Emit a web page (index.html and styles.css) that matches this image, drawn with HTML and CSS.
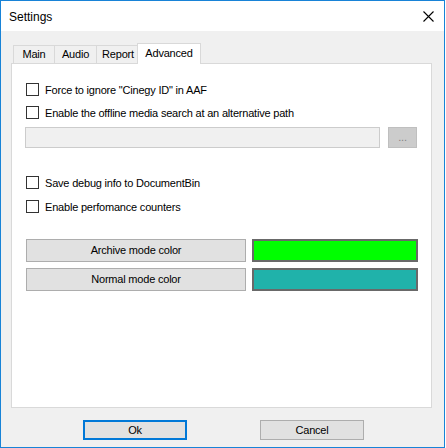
FILE: index.html
```html
<!DOCTYPE html>
<html>
<head>
<meta charset="utf-8">
<link rel="stylesheet" href="styles.css">
</head>
<body>
<div class="window">
  <div class="titlebar">
    <span class="title">Settings</span>
    <svg class="close" width="11" height="11" viewBox="0 0 11 11"><path d="M0.5 0.5 L10.5 10.5 M10.5 0.5 L0.5 10.5" stroke="#000" stroke-width="1.1" fill="none"/></svg>
  </div>
  <div class="content">
    <div class="tabs">
      <div class="tab t-main">Main</div>
      <div class="tab t-audio">Audio</div>
      <div class="tab t-report">Report</div>
      <div class="tab t-adv active">Advanced</div>
    </div>
    <div class="panel">
      <label class="check r1"><span class="box"></span>Force to ignore "Cinegy ID" in AAF</label>
      <label class="check r2"><span class="box"></span>Enable the offline media search at an alternative path</label>
      <div class="pathrow">
        <div class="pathfield"></div>
        <div class="browse">...</div>
      </div>
      <label class="check r3"><span class="box"></span>Save debug info to DocumentBin</label>
      <label class="check r4"><span class="box"></span>Enable perfomance counters</label>
      <div class="colorrow c1">
        <div class="colorbtn">Archive mode color</div>
        <div class="swatch green"></div>
      </div>
      <div class="colorrow c2">
        <div class="colorbtn">Normal mode color</div>
        <div class="swatch teal"></div>
      </div>
    </div>
    <div class="buttons">
      <div class="btn ok">Ok</div>
      <div class="btn cancel">Cancel</div>
    </div>
  </div>
</div>
</body>
</html>
```
FILE: styles.css
```css
html, body {
  margin: 0;
  padding: 0;
  background: #ffffff;
}
.window {
  width: 445px;
  height: 448px;
  box-sizing: border-box;
  border: 1px solid #1883d7;
  background: #f0f0f0;
  font-family: "Liberation Sans", Arial, sans-serif;
  font-size: 11px;
  letter-spacing: -0.2px;
  color: #000;
}
.titlebar {
  height: 30px;
  background: #ffffff;
  display: flex;
  align-items: center;
  justify-content: space-between;
  padding: 0 10px 0 8px;
  letter-spacing: 0;
}
.title {
  font-size: 12px;
  padding-top: 1px;
}
.close {
  display: block;
  margin-top: 1px;
}
.content {
  padding: 12px 0 0 10px;
}
.tabs {
  display: flex;
  align-items: flex-end;
  height: 20px;
  padding-left: 2px;
}
.tab {
  box-sizing: border-box;
  height: 18px;
  border: 1px solid #d9d9d9;
  border-bottom: none;
  background: #f0f0f0;
  text-align: center;
  line-height: 17px;
  margin-left: -1px;
}
.tab:first-child {
  margin-left: 0;
}
.t-main { width: 42px; }
.t-audio { width: 43px; }
.t-report { width: 44px; }
.tab.active {
  position: relative;
  z-index: 2;
  width: 64px;
  height: 21px;
  line-height: 18px;
  background: #ffffff;
  margin: 0 0 -1px -3px;
}
.panel {
  box-sizing: border-box;
  width: 421px;
  height: 345px;
  border: 1px solid #d9d9d9;
  background: #ffffff;
  padding: 19px 0 0 13px;
  display: flex;
  flex-direction: column;
  align-items: flex-start;
}
.check {
  display: flex;
  align-items: center;
  height: 13px;
  margin-left: 1px;
  white-space: nowrap;
}
.box {
  box-sizing: border-box;
  width: 13px;
  height: 13px;
  border: 1px solid #333333;
  background: #fff;
  margin-right: 6px;
  flex: none;
}
.r2 { margin-top: 10px; }
.pathrow {
  display: flex;
  margin-top: 8px;
  gap: 8px;
}
.pathfield {
  box-sizing: border-box;
  width: 355px;
  height: 21px;
  border: 1px solid #cccccc;
  background: #f0f0f0;
}
.browse {
  box-sizing: border-box;
  width: 29px;
  height: 21px;
  border: 1px solid #bfbfbf;
  background: #cccccc;
  color: #838383;
  text-align: center;
  line-height: 19px;
}
.r3 { margin-top: 28px; }
.r4 { margin-top: 11px; }
.colorrow {
  display: flex;
  gap: 6px;
  margin-left: 1px;
}
.c1 { margin-top: 26px; }
.c2 { margin-top: 6px; }
.colorbtn {
  box-sizing: border-box;
  width: 220px;
  height: 23px;
  border: 1px solid #adadad;
  background: #e1e1e1;
  text-align: center;
  line-height: 21px;
}
.swatch {
  box-sizing: border-box;
  width: 166px;
  height: 23px;
  border: 2px solid #696969;
}
.green { background: #00ff00; }
.teal { background: #20b2aa; }
.buttons {
  display: flex;
  gap: 73px;
  margin-top: 12px;
  padding-left: 72px;
}
.btn {
  box-sizing: border-box;
  width: 104px;
  height: 20px;
  border: 1px solid #adadad;
  background: #e1e1e1;
  text-align: center;
  line-height: 18px;
}
.btn.ok {
  border: 2px solid #0078d7;
  line-height: 16px;
}
```
